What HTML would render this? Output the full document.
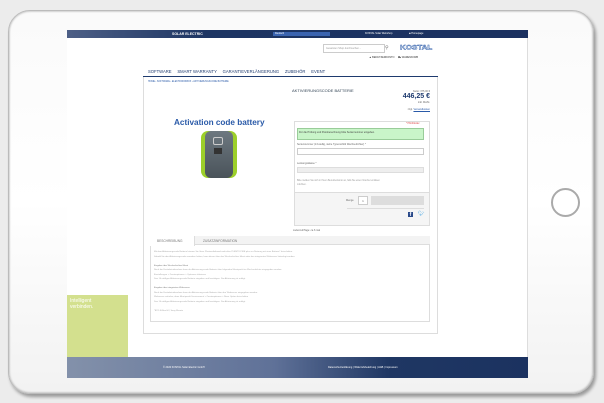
<!DOCTYPE html><html><head><meta charset="utf-8"><style>
*{margin:0;padding:0;box-sizing:border-box}
body{width:604px;height:403px;background:#ececec;position:relative;overflow:hidden;font-family:"Liberation Sans",sans-serif;color:#666}
.a{position:absolute}
.t{font-size:3px;white-space:nowrap}
</style></head><body>
<div class="a" style="left:8px;top:10px;width:586px;height:384px;border-radius:22px;background:linear-gradient(#fafafa,#fff 50%,#f2f2f2);box-shadow:2px 3px 3px rgba(0,0,0,.35),inset 0 0 2px #999;border:1px solid #bbb"></div>
<div class="a" style="left:551px;top:188px;width:29px;height:29px;border-radius:50%;border:2px solid #aaa;background:#fff"></div>
<div class="a" style="left:67px;top:30px;width:461px;height:348px;background:#fff;border-right:1px solid #ddd"></div>
<div class="a" style="left:67px;top:30px;width:461px;height:8px;background:linear-gradient(90deg,#4d5f86,#1d3563 30%,#1b3160)"></div>
<div class="a t" style="left:172px;top:32px;color:#fff;font-weight:bold;font-size:3.5px">SOLAR ELECTRIC</div>
<div class="a" style="left:273px;top:32px;width:57px;height:4px;background:#3a64b0"></div>
<div class="a t" style="left:275px;top:32px;color:#fff;font-size:2.5px">Deutsch</div>
<div class="a t" style="left:365px;top:32px;color:#fff;font-size:2.5px">KOSTAL Solar Webshop</div>
<div class="a t" style="left:409px;top:32px;color:#fff;font-size:2.5px">■ Homepage</div>
<div class="a" style="left:323px;top:44px;width:62px;height:9px;border:1px solid #ccc"></div>
<div class="a t" style="left:326px;top:47px;color:#999;font-size:2.5px">Gesamten Shop durchsuchen...</div>
<div class="a t" style="left:385px;top:45px;color:#777;font-size:5px">⚲</div>
<div class="a" style="left:400px;top:43px;font-size:8px;font-weight:bold;color:#fff;-webkit-text-stroke:.5px #2a5aa8;transform:scaleY(.85)">KOSTAL</div>
<div class="a t" style="left:369px;top:56px;color:#333;font-size:2.5px">▲ BENUTZERKONTO &nbsp;&nbsp;&nbsp;&nbsp;⛟ WARENKORB</div>
<div class="a t" style="left:148px;top:69px;font-size:4.2px;color:#1e3a6e">SOFTWARE &nbsp;&nbsp;&nbsp;&nbsp;SMART WARRANTY &nbsp;&nbsp;&nbsp;&nbsp;GARANTIEVERLÄNGERUNG &nbsp;&nbsp;&nbsp;&nbsp;ZUBEHÖR &nbsp;&nbsp;&nbsp;&nbsp;EVENT</div>
<div class="a" style="left:143px;top:76px;width:295px;height:1px;background:#1e3a6e"></div>
<div class="a" style="left:143px;top:77px;width:295px;height:257px;border:1px solid #ddd;border-top:0"></div>
<div class="a t" style="left:148px;top:81px;color:#2a5aa8;font-size:2.3px">HOME › SOFTWARE › ELEKTRONIKBOX › AKTIVIERUNGSCODE BATTERIE</div>
<div class="a t" style="left:292px;top:88px;font-size:4px;color:#345">AKTIVIERUNGSCODE BATTERIE</div>
<div class="a t" style="right:174px;top:90px;font-size:2.5px">Netto: 375,00 €</div>
<div class="a t" style="right:174px;top:93px;font-size:7px;font-weight:bold;color:#1e3a6e">446,25 €</div>
<div class="a t" style="right:174px;top:101px;font-size:2.5px">inkl. MwSt.</div>
<div class="a t" style="right:174px;top:108px;font-size:2.5px">zzgl. <u style="color:#2a5aa8">Versandkosten</u></div>
<div class="a t" style="left:174px;top:118px;font-size:8.2px;font-weight:bold;color:#2a5aa8">Activation code battery</div>
<div class="a" style="left:201px;top:131px;width:36px;height:47px;border-radius:7px;background:#9ccf2a"></div>
<div class="a" style="left:205px;top:131px;width:28px;height:47px;border-radius:6px;background:linear-gradient(#6d7880,#4a535a)"></div>
<div class="a" style="left:213px;top:137px;width:10px;height:8px;border:1px solid #ccc;border-radius:2px"></div>
<div class="a" style="left:214px;top:148px;width:8px;height:6px;background:#333"></div>
<div class="a" style="left:294px;top:121px;width:136px;height:105px;border:1px solid #ddd"></div>
<div class="a t" style="left:406px;top:123px;color:#d44;font-size:2.3px">* Pflichtfelder</div>
<div class="a" style="left:297px;top:128px;width:127px;height:12px;background:#c9f5c9;border:1px solid #9c9"></div>
<div class="a t" style="left:299px;top:131px;font-size:2.5px;color:#444">Für die Prüfung und Preisberechnung bitte Seriennummer eingeben.</div>
<div class="a t" style="left:297px;top:143px;font-size:2.5px">Seriennummer (13-stellig, siehe Typenschild Wechselrichter) *</div>
<div class="a" style="left:297px;top:148px;width:127px;height:7px;border:1px solid #ccc"></div>
<div class="a t" style="left:297px;top:162px;font-size:2.5px">Leistungsklasse *</div>
<div class="a" style="left:297px;top:167px;width:127px;height:6px;background:#eee;border:1px solid #ddd"></div>
<div class="a t" style="left:297px;top:180px;font-size:2.3px;color:#999">Bitte melden Sie sich in Ihrem Benutzerkonto an, falls Sie einen Voucher einlösen<br><br>möchten.</div>
<div class="a" style="left:295px;top:192px;width:134px;height:33px;background:#f5f5f5;border-top:1px solid #ddd"></div>
<div class="a t" style="left:346px;top:199px;font-size:2.5px">Menge</div>
<div class="a" style="left:358px;top:196px;width:10px;height:9px;background:#fff;border:1px solid #ccc;font-size:3px;text-align:center;line-height:8px">1</div>
<div class="a" style="left:371px;top:196px;width:53px;height:9px;background:#ddd"></div>
<div class="a" style="left:347px;top:208px;width:77px;height:1px;background:#ddd"></div>
<div class="a" style="left:408px;top:212px;width:5px;height:5px;background:#2a4a8a;color:#fff;font-size:5px;line-height:6px;text-align:center;font-weight:bold">f</div>
<div class="a t" style="left:418px;top:211px;color:#3aa0e0;font-size:5px">🐦︎</div>
<div class="a t" style="left:293px;top:229px;font-size:2.5px">Lieferzeit/Tage: ca 6 mal</div>
<div class="a" style="left:150px;top:236px;width:280px;height:86px;border:1px solid #ddd"></div>
<div class="a" style="left:150px;top:236px;width:280px;height:9px;background:#f3f3f3;border-bottom:1px solid #ddd"></div>
<div class="a" style="left:150px;top:236px;width:45px;height:10px;background:#fff;border-right:1px solid #ddd"></div>
<div class="a t" style="left:157px;top:239px;font-size:3.2px;color:#777">BESCHREIBUNG</div>
<div class="a t" style="left:203px;top:239px;font-size:3.2px;color:#777">ZUSATZINFORMATION</div>
<div class="a t" style="left:154px;top:250px;font-size:2.2px;color:#aaa;line-height:4.5px">Mit dem Aktivierungscode Batterie können Sie Ihren Photovoltaikwechselrichter PLENTICORE plus zur Nutzung mit einer Batterie* freischalten.<br>Sobald Sie den Aktivierungscode erworben haben, kann dieser über das Wechselrichter Menü oder den integrierten Webserver hinterlegt werden.<br><br><span style="color:#777">Eingabe über Wechselrichter Menü</span><br>Nach der Erstinbetriebnahme kann der Aktivierungscode Batterie über folgenden Menüpunkt im Wechselrichter eingegeben werden:<br>Einstellungen > Zusatzoptionen > Optionen aktivieren<br>Den 10-stelligen Aktivierungscode Batterie eingeben und bestätigen. Die Aktivierung ist erfolgt.<br><br><span style="color:#777">Eingabe über integrierten Webserver</span><br>Nach der Erstinbetriebnahme kann der Aktivierungscode Batterie über den Webserver eingegeben werden:<br>Webserver aufrufen, dann Menüpunkt Servicemenü > Zusatzoptionen > Neue Option freischalten<br>Den 10-stelligen Aktivierungscode Batterie eingeben und bestätigen. Die Aktivierung ist erfolgt.<br><br>*BYD B-Box HV, Sony Murata</div>
<div class="a" style="left:67px;top:295px;width:61px;height:62px;background:#d3e08e"></div>
<div class="a" style="left:70px;top:299px;font-size:5px;color:#fff;line-height:5.5px">Intelligent<br>verbinden.</div>
<div class="a" style="left:67px;top:357px;width:461px;height:21px;background:linear-gradient(90deg,#8391aa,#5f7198 45%,#1f3763 70%,#1b3260)"></div>
<div class="a t" style="left:163px;top:366px;color:#fff;font-size:2.5px">© 2020 KOSTAL Solar Electric GmbH</div>
<div class="a t" style="left:328px;top:366px;color:#fff;font-size:2.5px">Datenschutzerklärung | Widerrufsbelehrung | AGB | Impressum</div>
</body></html>
